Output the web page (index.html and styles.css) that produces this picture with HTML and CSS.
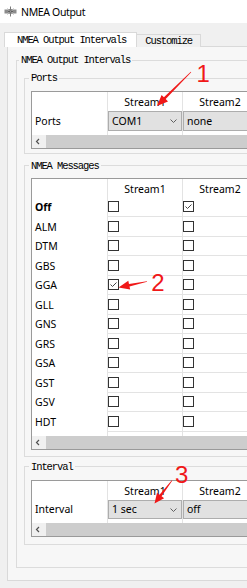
FILE: index.html
```html
<!DOCTYPE html>
<html>
<head>
<meta charset="utf-8">
<title>NMEA Output</title>
<link rel="stylesheet" href="styles.css">
</head>
<body>
<div class="window">
  <div class="titlebar">
    <svg class="app-icon" width="13" height="13" viewBox="0 0 13 13">
      <rect x="0.5" y="4.5" width="3.5" height="4" fill="#8c8c8c"/>
      <rect x="9" y="4.5" width="3.5" height="4" fill="#8c8c8c"/>
      <line x1="4" y1="6.5" x2="9" y2="6.5" stroke="#6a6a6a" stroke-width="1"/>
      <circle cx="6.5" cy="6.5" r="2.4" fill="#5f5f5f"/>
      <line x1="6.5" y1="1.5" x2="6.5" y2="11.5" stroke="#7a7a7a" stroke-width="1"/>
      <line x1="3.5" y1="3.5" x2="9.5" y2="9.5" stroke="#9a9a9a" stroke-width="0.8"/>
      <line x1="9.5" y1="3.5" x2="3.5" y2="9.5" stroke="#9a9a9a" stroke-width="0.8"/>
    </svg>
    <span class="title">NMEA Output</span>
  </div>

  <div class="tabs">
    <div class="tab active">NMEA Output Intervals</div>
    <div class="tab">Customize</div>
  </div>

  <div class="pane">
    <fieldset class="group outer">
      <legend>NMEA Output Intervals</legend>

      <fieldset class="group ports">
        <legend>Ports</legend>
        <div class="table">
          <div class="grid rows-1">
            <div class="corner"></div>
            <div class="hcell">Stream1</div>
            <div class="hcell">Stream2</div>
            <div class="vh">Ports</div>
            <div class="cell combo-cell">
              <div class="combo"><span>COM1</span>
                <svg class="chev" width="7" height="4" viewBox="0 0 7 4"><polyline points="0.5,0.5 3.5,3.5 6.5,0.5" fill="none" stroke="#606060" stroke-width="1"/></svg>
              </div>
            </div>
            <div class="cell combo-cell">
              <div class="combo"><span>none</span></div>
            </div>
          </div>
          <div class="grid filler"><div class="vh"></div><div class="cell"></div><div class="cell"></div></div>
          <div class="hscroll">
            <div class="sb-btn"><svg width="14" height="13" viewBox="0 0 14 13"><polyline points="7,4 4.5,6.5 7,9" fill="none" stroke="#505050" stroke-width="1.2"/></svg></div>
            <div class="sb-thumb"></div>
          </div>
        </div>
      </fieldset>

      <fieldset class="group messages">
        <legend>NMEA Messages</legend>
        <div class="table">
          <div class="grid rows-12">
            <div class="corner"></div>
            <div class="hcell">Stream1</div>
            <div class="hcell">Stream2</div>

            <div class="vh bold">Off</div>
            <div class="cell"><span class="cb"></span></div>
            <div class="cell"><span class="cb"><svg width="9" height="9" viewBox="0 0 9 9"><polyline points="1.5,4.5 3.5,6.5 7.5,2.5" fill="none" stroke="#444" stroke-width="1"/></svg></span></div>

            <div class="vh">ALM</div>
            <div class="cell"><span class="cb"></span></div>
            <div class="cell"><span class="cb"></span></div>

            <div class="vh">DTM</div>
            <div class="cell"><span class="cb"></span></div>
            <div class="cell"><span class="cb"></span></div>

            <div class="vh">GBS</div>
            <div class="cell"><span class="cb"></span></div>
            <div class="cell"><span class="cb"></span></div>

            <div class="vh">GGA</div>
            <div class="cell"><span class="cb"><svg width="9" height="9" viewBox="0 0 9 9"><polyline points="1.5,4.5 3.5,6.5 7.5,2.5" fill="none" stroke="#444" stroke-width="1"/></svg></span></div>
            <div class="cell"><span class="cb"></span></div>

            <div class="vh">GLL</div>
            <div class="cell"><span class="cb"></span></div>
            <div class="cell"><span class="cb"></span></div>

            <div class="vh">GNS</div>
            <div class="cell"><span class="cb"></span></div>
            <div class="cell"><span class="cb"></span></div>

            <div class="vh">GRS</div>
            <div class="cell"><span class="cb"></span></div>
            <div class="cell"><span class="cb"></span></div>

            <div class="vh">GSA</div>
            <div class="cell"><span class="cb"></span></div>
            <div class="cell"><span class="cb"></span></div>

            <div class="vh">GST</div>
            <div class="cell"><span class="cb"></span></div>
            <div class="cell"><span class="cb"></span></div>

            <div class="vh">GSV</div>
            <div class="cell"><span class="cb"></span></div>
            <div class="cell"><span class="cb"></span></div>

            <div class="vh">HDT</div>
            <div class="cell"><span class="cb"></span></div>
            <div class="cell"><span class="cb"></span></div>
          </div>
          <div class="grid filler"><div class="vh"></div><div class="cell"></div><div class="cell"></div></div>
          <div class="hscroll">
            <div class="sb-btn"><svg width="14" height="13" viewBox="0 0 14 13"><polyline points="7,4 4.5,6.5 7,9" fill="none" stroke="#505050" stroke-width="1.2"/></svg></div>
            <div class="sb-thumb"></div>
          </div>
        </div>
      </fieldset>

      <fieldset class="group interval">
        <legend>Interval</legend>
        <div class="table">
          <div class="grid rows-1">
            <div class="corner"></div>
            <div class="hcell">Stream1</div>
            <div class="hcell">Stream2</div>
            <div class="vh">Interval</div>
            <div class="cell combo-cell">
              <div class="combo"><span>1 sec</span>
                <svg class="chev" width="7" height="4" viewBox="0 0 7 4"><polyline points="0.5,0.5 3.5,3.5 6.5,0.5" fill="none" stroke="#606060" stroke-width="1"/></svg>
              </div>
            </div>
            <div class="cell combo-cell">
              <div class="combo"><span>off</span></div>
            </div>
          </div>
          <div class="grid filler"><div class="vh"></div><div class="cell"></div><div class="cell"></div></div>
          <div class="hscroll">
            <div class="sb-btn"><svg width="14" height="13" viewBox="0 0 14 13"><polyline points="7,4 4.5,6.5 7,9" fill="none" stroke="#505050" stroke-width="1.2"/></svg></div>
            <div class="sb-thumb"></div>
          </div>
        </div>
      </fieldset>
    </fieldset>
  </div>
</div>

<svg class="annotations" width="247" height="588" viewBox="0 0 247 588">
  <text x="196.4" y="82" class="note">1</text>
  <polygon points="191.2,72.2 165.7,99.1 168.0,101.4 157,106 161.6,95.0 163.9,97.3 190.8,71.8" class="arrow"/>
  <text x="151.3" y="291" class="note">2</text>
  <polygon points="147.1,281.8 129.5,286.5 130.2,289.6 118.5,287.5 128.3,280.8 129.0,284.0 146.9,281.2" class="arrow"/>
  <text x="175" y="482.5" class="note">3</text>
  <polygon points="172.2,480.7 161.6,496.3 164.1,498.3 154.5,503.5 157.0,492.8 159.5,494.8 171.8,480.3" class="arrow"/>
</svg>
</body>
</html>
```

FILE: styles.css
```css
* { box-sizing: border-box; }

html, body {
  margin: 0;
  padding: 0;
}

body {
  width: 247px;
  height: 588px;
  overflow: hidden;
  position: relative;
  background: #f0f0f0;
  font-family: "Noto Sans", sans-serif;
  font-size: 10.5px;
  color: #000;
}

.window {
  width: 340px;
}

/* title bar */
.titlebar {
  height: 23px;
  background: #ffffff;
  display: flex;
  align-items: center;
  padding-left: 4px;
  gap: 4px;
}

.app-icon { display: block; }

.title {
  font-size: 10.5px;
  letter-spacing: -0.35px;
}

/* tabs */
.tabs {
  display: flex;
  align-items: flex-end;
  margin-top: 9px;
  padding-left: 4px;
  height: 15px;
  position: relative;
  z-index: 1;
}

.tab {
  font-family: "Liberation Mono", monospace;
  font-size: 10.5px;
  letter-spacing: -1.1px;
  line-height: 12px;
  height: 13px;
  border: 1px solid #d9d9d9;
  border-bottom: none;
  background: #f0f0f0;
  padding: 0 8px 0 8px;
  white-space: nowrap;
}

.tab.active {
  height: 15px;
  line-height: 14px;
  background: #ffffff;
  padding: 0 10px 0 12px;
  margin-right: -1px;
}

/* tab pane */
.pane {
  margin-left: 7px;
  margin-top: -1px;
  border: 1px solid #d9d9d9;
  background: #f7f7f7;
  padding: 8px 0 12px 8px;
}

/* group boxes */
.group {
  margin: 0;
  border: 1px solid #dcdcdc;
  min-inline-size: 0;
}

.group > legend {
  font-family: "Liberation Mono", monospace;
  font-size: 10.5px;
  letter-spacing: -1.1px;
  line-height: 10px;
  padding: 0 2px;
  white-space: nowrap;
}

.outer {
  padding: 8px 0 22px 7px;
}
.outer > legend { margin-left: -5px; }

.ports, .messages, .interval {
  padding-left: 6px;
  padding-right: 0;
}
.ports > legend, .messages > legend, .interval > legend { margin-left: -2px; }

.ports { padding-top: 8px; padding-bottom: 4px; }
.messages { margin-top: 7px; padding-top: 7px; padding-bottom: 6px; }
.interval { margin-top: 5px; padding-top: 8px; padding-bottom: 7px; }

/* table views */
.table {
  border: 1px solid #9a9a9a;
  background: #ffffff;
}

.grid {
  display: grid;
  grid-template-columns: 76px 75px 75px;
}

.rows-1 { grid-template-rows: 19px 19.5px; }
.rows-12 { grid-template-rows: 19px repeat(12, 19.5px); }
.filler { grid-template-rows: 4px; }

.corner, .hcell, .vh, .cell {
  border-right: 1px solid #e3e3e3;
}

.hcell {
  text-align: center;
  padding-top: 2px;
  line-height: 17px;
  white-space: nowrap;
}

.vh {
  display: flex;
  align-items: center;
  padding-left: 3px;
  white-space: nowrap;
}

.bold { font-weight: 700; }

.cell {
  display: flex;
  align-items: center;
  border-bottom: 1px solid #e3e3e3;
}

.filler .cell,
.combo-cell { border-bottom: none; }

.cb {
  width: 11px;
  height: 11px;
  border: 1px solid #333333;
  background: #ffffff;
  display: flex;
  align-items: center;
  justify-content: center;
}

.combo {
  width: 100%;
  height: 100%;
  background: #e1e1e1;
  border: 1px solid #adadad;
  display: flex;
  align-items: center;
  justify-content: space-between;
  padding: 0 4px 0 3px;
  white-space: nowrap;
}

.chev { display: block; margin-top: 1px; }

/* horizontal scroll bar */
.hscroll {
  display: flex;
  height: 13px;
  background: #f0f0f0;
}

.sb-btn {
  width: 14px;
  flex: none;
}
.sb-btn svg { display: block; }

.sb-thumb {
  flex: 1;
  background: #cdcdcd;
}

/* annotation overlay */
.annotations {
  position: absolute;
  left: 0;
  top: 0;
  pointer-events: none;
}

.note {
  font-family: "Liberation Sans", sans-serif;
  font-size: 24px;
  fill: #f01818;
}

.arrow { fill: #f01818; }
```
